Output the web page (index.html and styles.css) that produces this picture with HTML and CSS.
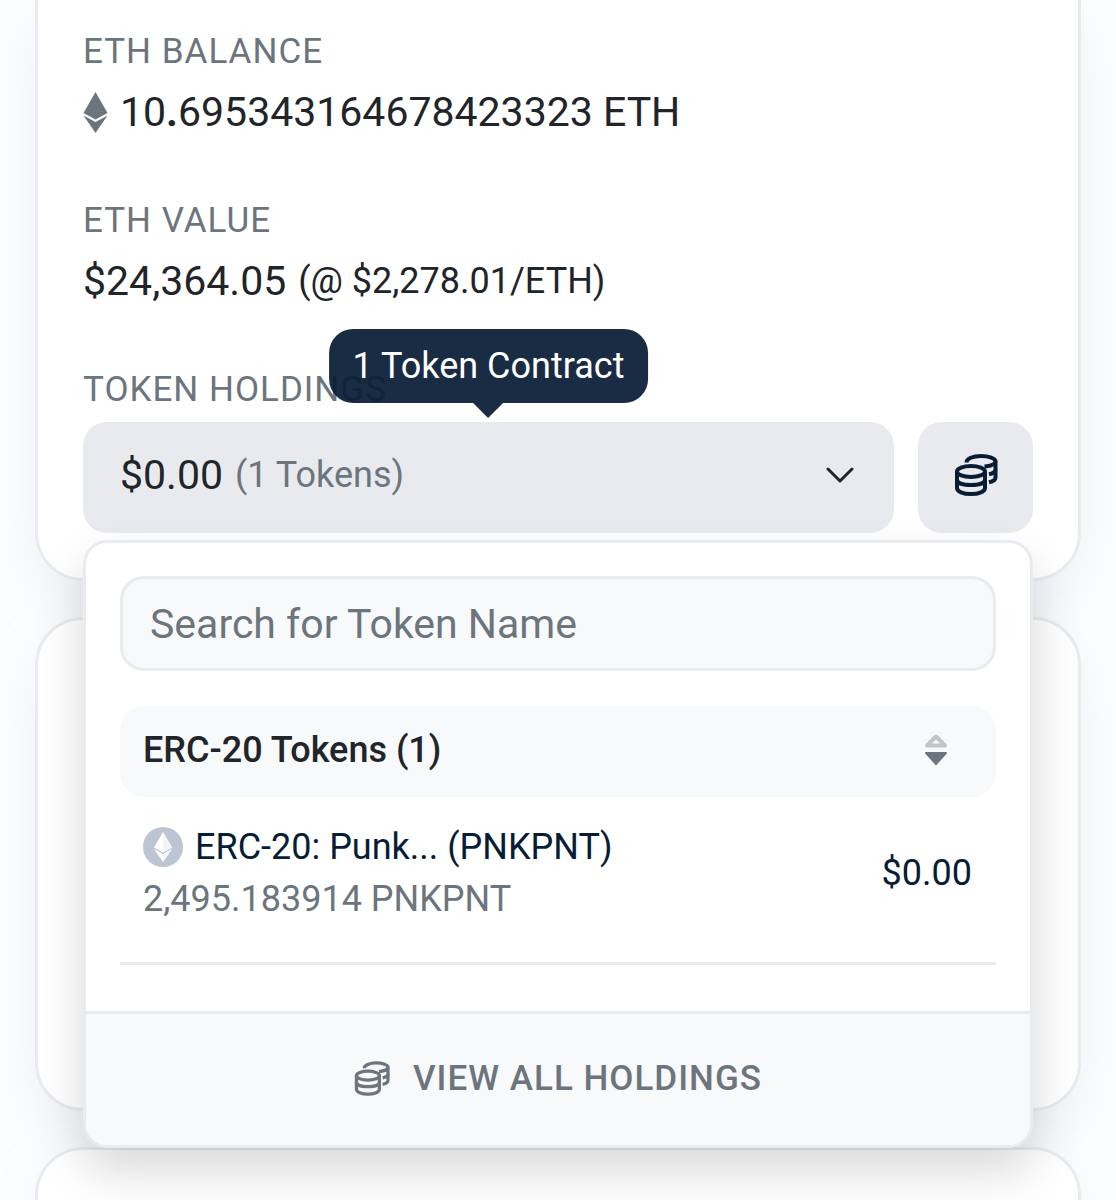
FILE: index.html
```html
<!DOCTYPE html>
<html lang="en">
<head>
<meta charset="utf-8">
<meta name="viewport" content="width=device-width, initial-scale=1">
<title>Address overview</title>
<link rel="stylesheet" href="styles.css">
</head>
<body>
<svg class="sprite" aria-hidden="true">
  <symbol id="coins" viewBox="0 0 44 42">
    <g fill="none" stroke="currentColor" stroke-width="4" stroke-linecap="butt" stroke-linejoin="round">
      <ellipse cx="17" cy="17.500" rx="14" ry="5.500"/>
      <path d="M3 18V34C3 37.500 9 40 17 40S31 37.500 31 34V18"/>
      <path d="M3 25.500C3 29 9 31 17 31S31 29 31 25.500"/>
      <path d="M12.500 8.500C12.500 4.500 19 2 27 2S41.500 4.500 41.500 7.500V23.500C41.500 26 38.500 27.500 35 28.300"/>
      <path d="M41.500 7.500C41.500 10 37 12 30.500 12.500"/>
      <path d="M41.500 15.500C41.500 18 38.500 19.500 35 20.300"/>
    </g>
  </symbol>
</svg>

<main class="page">
  <section class="card overview">
    <div class="field">
      <h2 class="label">ETH BALANCE</h2>
      <p class="value">
        <svg class="eth" viewBox="0 0 24 41" aria-hidden="true"><path d="M12 0L24 21L12 27.500L0 21Z"/><path d="M0 23.500L12 30L24 23.500L12 41Z"/></svg>
        <span>10<b>.</b>695343164678423323 ETH</span>
      </p>
    </div>
    <div class="field">
      <h2 class="label">ETH VALUE</h2>
      <p class="value">$24,364.05 <span class="rate">(@ $2,278.01/ETH)</span></p>
    </div>
    <div class="holdings">
      <h2 class="label">TOKEN HOLDINGS</h2>
      <div class="actions">
        <div class="picker">
          <button class="toggle" type="button" aria-expanded="true" aria-describedby="tip">
            <span class="total">$0.00 <span class="count">(1 Tokens)</span></span>
            <svg class="chevron" viewBox="0 0 28 16" aria-hidden="true"><path d="M2 2L14 14L26 2"/></svg>
          </button>
          <div class="tooltip" id="tip" role="tooltip">1 Token Contract</div>
        </div>
        <button class="wallet" type="button" aria-label="View holdings"><svg class="coins" aria-hidden="true"><use href="#coins"/></svg></button>
        <div class="menu">
          <div class="menu-body">
            <input class="search" type="text" placeholder="Search for Token Name" aria-label="Search for Token Name">
            <div class="group">
              <h3 class="group-title">ERC-20 Tokens (1)</h3>
              <button class="sort" type="button" aria-label="Sort">
                <svg viewBox="0 0 24 32" aria-hidden="true"><path class="up" d="M12 2.500L21 11.500H3Z"/><path class="down" d="M2 19H22L12 30Z"/></svg>
              </button>
            </div>
            <ul class="tokens">
              <li>
                <a class="token" href="#">
                  <span class="token-info">
                    <span class="token-name">
                      <svg class="token-icon" viewBox="0 0 40 40" aria-hidden="true"><circle cx="20" cy="20" r="20" fill="#bdc4d2"/><path d="M20 5L29 20.500L20 25.500L11 20.500Z" fill="#fff"/><path d="M11 22L20 27L29 22L20 35Z" fill="#fff"/><path d="M20 5V25.500L29 20.500ZM20 27V35L29 22Z" fill="#f3f5f8"/></svg>
                      ERC-20: Punk... (PNKPNT)
                    </span>
                    <span class="token-amount">2,495.183914 PNKPNT</span>
                  </span>
                  <span>$0.00</span>
                </a>
              </li>
            </ul>
          </div>
          <a class="menu-footer" href="#"><svg class="coins small" aria-hidden="true"><use href="#coins"/></svg>VIEW ALL HOLDINGS</a>
        </div>
      </div>
    </div>
  </section>
  <section class="card info"></section>
  <section class="card last"></section>
</main>
</body>
</html>
```
FILE: styles.css
```css
* { box-sizing: border-box; }

body {
  margin: 0;
  background: #fcfdfe;
  color: #212529;
  font: 36px/52px Roboto, "Liberation Sans", sans-serif;
}

h2, h3, p, ul { margin: 0; padding: 0; font-weight: 400; }
ul { list-style: none; }
a { color: inherit; text-decoration: none; }
button, input { font: inherit; color: inherit; margin: 0; border: 0; }
button { background: none; padding: 0; cursor: pointer; }
svg { display: block; flex: none; }
.sprite { position: absolute; width: 0; height: 0; }

.page {
  display: flex;
  flex-direction: column;
  gap: 36px;
  min-height: 100vh;
  padding: 0 35px;
}

.card {
  background: #fff;
  border: 3px solid #e9ecef;
  border-radius: 48px;
  box-shadow: 0 24px 58px rgba(189, 197, 209, 0.2);
}

.overview {
  display: flex;
  flex-direction: column;
  gap: 48px;
  padding: 26px 45px 45px;
  border-top: 0;
  border-radius: 0 0 48px 48px;
}
.info { min-height: 494px; }
.last { flex: 1; border-bottom: 0; border-radius: 48px 48px 0 0; }

.label { font-size: 35px; letter-spacing: 1px; color: #6c757d; }
.value { display: flex; align-items: center; gap: 12px; font-size: 41px; line-height: 69px; }
.rate { font-size: 36px; }
.eth { width: 25px; height: 41px; fill: #6c757d; }

.holdings { display: flex; flex-direction: column; gap: 6px; }
.actions { position: relative; display: flex; gap: 24px; }
.picker { position: relative; flex: 1; }

.toggle {
  display: flex;
  align-items: center;
  justify-content: space-between;
  width: 100%;
  height: 111px;
  padding: 0 40px 6px 37px;
  background: #e9eaee;
  border-radius: 24px;
  font-size: 41px;
}
.total { display: flex; align-items: center; gap: 12px; }
.count { font-size: 36px; color: #6c757d; }
.chevron { width: 28px; height: 16px; fill: none; stroke: #212529; stroke-width: 3; stroke-linecap: round; stroke-linejoin: round; }

.wallet {
  display: flex;
  align-items: center;
  justify-content: center;
  width: 115px;
  height: 111px;
  padding-bottom: 6px;
  background: #e9eaee;
  border-radius: 24px;
  color: #081d35;
}
.coins { width: 44px; height: 42px; }
.small { width: 36px; height: 35px; }

.tooltip {
  position: absolute;
  bottom: calc(100% + 19px);
  left: 50%;
  transform: translateX(-50%);
  padding: 11px 24px;
  border-radius: 24px;
  background: #081d35;
  color: #fff;
  opacity: 0.93;
  white-space: nowrap;
}
.tooltip::after {
  content: "";
  position: absolute;
  top: 100%;
  left: 50%;
  margin-left: -15px;
  border: 15px solid transparent;
  border-top-color: #081d35;
  border-bottom: 0;
}

.menu {
  position: absolute;
  z-index: 1;
  top: calc(100% + 7px);
  left: 0;
  right: 0;
  overflow: hidden;
  background: #fff;
  border: 3px solid #e9ecef;
  border-radius: 24px;
  box-shadow: 0 24px 48px rgba(0, 0, 0, 0.15);
}
.menu-body { padding: 33px 34px 46px; }

.search {
  display: block;
  width: 100%;
  height: 95px;
  padding: 0 27px;
  background: #f8f9fb;
  border: 3px solid #e9ecef;
  border-radius: 24px;
  font-size: 41px;
}
.search::placeholder { color: #6c757d; opacity: 1; }

.group {
  display: flex;
  align-items: center;
  justify-content: space-between;
  height: 91px;
  margin-top: 35px;
  padding: 0 48px 3px 23px;
  background: #f8f9fb;
  border-radius: 24px;
}
.group-title { font-size: 36px; font-weight: 500; }
.sort svg { width: 24px; height: 32px; }
.up { fill: none; stroke: #c2c4c7; stroke-width: 4; stroke-linejoin: round; }
.down { fill: #6c757d; stroke: #6c757d; stroke-width: 2; stroke-linejoin: round; }

.token {
  display: flex;
  align-items: center;
  justify-content: space-between;
  padding: 24px 24px 37px 23px;
  border-bottom: 3px solid #e9ecef;
  color: #081d35;
}
.token-info, .token-amount { display: block; }
.token-name { display: flex; align-items: center; gap: 12px; }
.token-amount { color: #6c757d; }
.token-icon { width: 40px; height: 40px; }

.menu-footer {
  display: flex;
  align-items: center;
  justify-content: center;
  gap: 23px;
  height: 134px;
  padding-bottom: 2px;
  background: #f8f9fb;
  border-top: 3px solid #e9ecef;
  color: #6c757d;
  font-size: 35px;
  font-weight: 500;
  letter-spacing: 1px;
}
```
